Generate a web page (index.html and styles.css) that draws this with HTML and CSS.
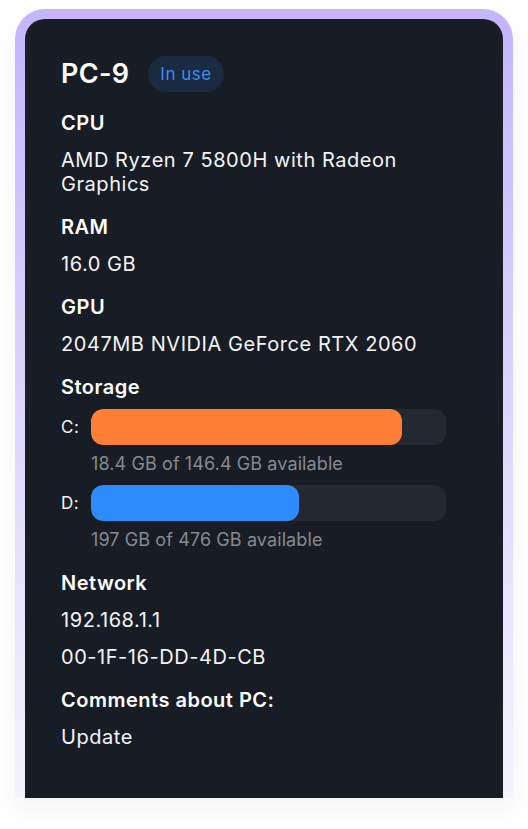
FILE: index.html
```html
<!DOCTYPE html>
<html lang="en">
<head>
<meta charset="utf-8">
<title>PC-9</title>
<link rel="stylesheet" href="styles.css">
</head>
<body>
<div class="frame">
  <div class="card">
    <div class="header">
      <h1 class="title">PC-9</h1>
      <span class="badge">In use</span>
    </div>
    <section class="section">
      <h2 class="label">CPU</h2>
      <p class="value">AMD Ryzen 7 5800H with Radeon Graphics</p>
    </section>
    <section class="section">
      <h2 class="label">RAM</h2>
      <p class="value">16.0 GB</p>
    </section>
    <section class="section">
      <h2 class="label">GPU</h2>
      <p class="value">2047MB NVIDIA GeForce RTX 2060</p>
    </section>
    <section class="section">
      <h2 class="label label-storage">Storage</h2>
      <div class="drive">
        <span class="drive-name">C:</span>
        <div class="bar"><div class="fill fill-orange" style="width: 87.6%"></div></div>
      </div>
      <p class="drive-info">18.4 GB of 146.4 GB available</p>
      <div class="drive">
        <span class="drive-name">D:</span>
        <div class="bar"><div class="fill fill-blue" style="width: 58.6%"></div></div>
      </div>
      <p class="drive-info">197 GB of 476 GB available</p>
    </section>
    <section class="section">
      <h2 class="label">Network</h2>
      <p class="value">192.168.1.1</p>
      <p class="value value-next">00-1F-16-DD-4D-CB</p>
    </section>
    <section class="section">
      <h2 class="label">Comments about PC:</h2>
      <p class="value">Update</p>
    </section>
  </div>
</div>
</body>
</html>
```

FILE: styles.css
```css
* { box-sizing: border-box; }
html, body { margin: 0; padding: 0; background: #ffffff; }
body {
  font-family: Inter, "Noto Sans", "Liberation Sans", sans-serif;
  padding: 9px 15px 0 15px;
  height: 829px;
  overflow: hidden;
}
.frame {
  width: 498px;
  height: 789px;
  padding: 10px 10px 0 10px;
  border-radius: 30px 30px 0 0;
  background: linear-gradient(180deg, #c4b5fd 0%, #ddd5fd 50%, #f5f3ff 100%);
  box-shadow: 0 12px 24px rgba(30, 30, 60, 0.05);
}
.card {
  height: 779px;
  background: #181d25;
  border-radius: 20px 20px 0 0;
  padding: 37px 36px 0 36px;
  color: #ffffff;
  overflow: hidden;
}
.header {
  display: flex;
  align-items: center;
  gap: 19px;
  height: 36px;
  margin-bottom: 19px;
}
.title {
  margin: 0;
  font-size: 27px;
  font-weight: 600;
  line-height: 36px;
  letter-spacing: 0.3px;
}
.badge {
  display: inline-flex;
  align-items: center;
  height: 36px;
  padding: 0 12px;
  border-radius: 18px;
  background: #1a2a40;
  color: #3b8ef5;
  font-size: 17px;
  letter-spacing: 0.5px;
}
.section { margin-bottom: 19px; }
.label {
  margin: 0 0 13px 0;
  font-size: 20px;
  font-weight: 600;
  line-height: 24px;
  letter-spacing: 0.5px;
}
.label-storage { margin-bottom: 10px; }
.value {
  margin: 0;
  font-size: 20px;
  font-weight: 400;
  line-height: 24px;
  color: #f3f4f6;
  letter-spacing: 0.55px;
}
.value-next { margin-top: 13px; }
.drive {
  display: flex;
  align-items: center;
}
.drive-name {
  width: 30px;
  font-size: 17px;
  color: #f3f4f6;
  letter-spacing: 0.5px;
}
.bar {
  width: 355px;
  height: 36px;
  border-radius: 12px;
  background: #242830;
  overflow: hidden;
}
.fill { height: 100%; border-radius: 12px; }
.fill-orange { background: #fe7f35; }
.fill-blue { background: #2d8bfb; }
.drive-info {
  margin: 7px 0 9px 30px;
  font-size: 18px;
  line-height: 24px;
  color: #868a91;
  letter-spacing: 0.1px;
}
.section .drive-info:last-child { margin-bottom: 0; }
```
